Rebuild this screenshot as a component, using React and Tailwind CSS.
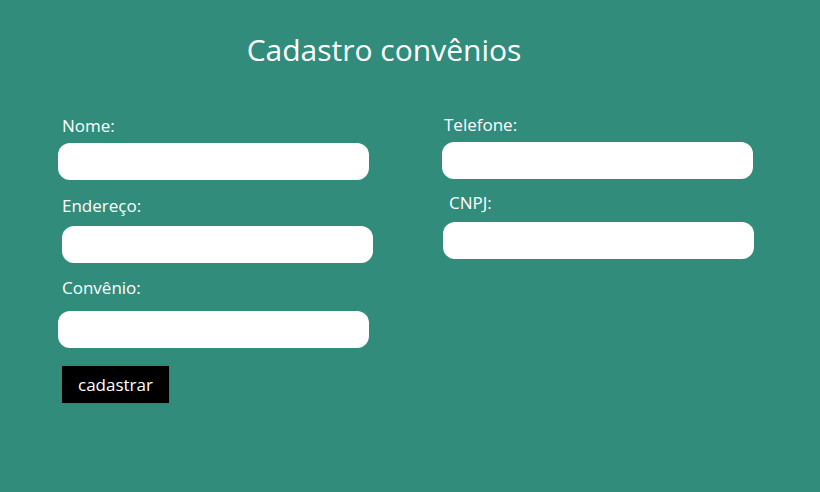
export default function App() {
    return (
        <div className="min-h-screen w-full bg-[#318c7c] text-white font-['Open_Sans','Noto_Sans',sans-serif]">
            <h1 className="w-[768px] pt-[30px] text-center text-[30px] leading-[40px] font-normal">
                Cadastro convênios
            </h1>

            <div className="mt-[40px] flex">
                {/* coluna esquerda */}
                <div className="flex w-[440px] flex-col pl-[58px]">
                    <label className="mt-[4px] ml-[4px] h-[24px] text-[17px] leading-[24px]">Nome:</label>
                    <input type="text" className="mt-[5px] h-[37px] w-[311px] rounded-[12px] bg-white outline-none" />

                    <label className="mt-[14px] ml-[4px] h-[24px] text-[17px] leading-[24px]">Endereço:</label>
                    <input type="text" className="mt-[8px] ml-[4px] h-[37px] w-[311px] rounded-[12px] bg-white outline-none" />

                    <label className="mt-[13px] ml-[4px] h-[24px] text-[17px] leading-[24px]">Convênio:</label>
                    <input type="text" className="mt-[11px] h-[37px] w-[311px] rounded-[12px] bg-white outline-none" />

                    <button
                        type="button"
                        className="mt-[17px] ml-[3px] h-[39px] w-[109px] border border-[#6b6b6b] bg-black text-[17px] text-white"
                    >
                        cadastrar
                    </button>
                </div>

                {/* coluna direita */}
                <div className="flex flex-col">
                    <label className="mt-[3px] ml-[4px] h-[24px] text-[17px] leading-[24px]">Telefone:</label>
                    <input type="text" className="mt-[5px] ml-[2px] h-[37px] w-[311px] rounded-[12px] bg-white outline-none" />

                    <label className="mt-[12px] ml-[9px] h-[24px] text-[17px] leading-[24px]">CNPJ:</label>
                    <input type="text" className="mt-[7px] ml-[3px] h-[37px] w-[311px] rounded-[12px] bg-white outline-none" />
                </div>
            </div>
        </div>
    );
}
